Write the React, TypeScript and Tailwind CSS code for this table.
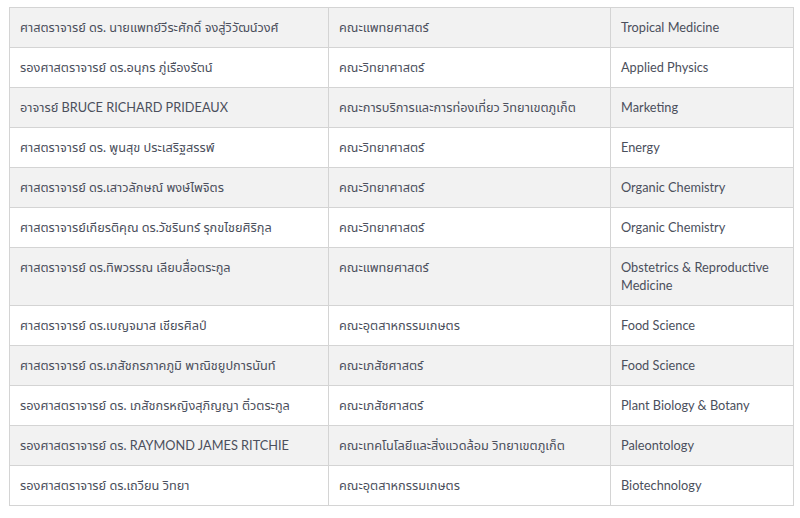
const rows: [string, string, string][] = [
  ['ศาสตราจารย์ ดร. นายแพทย์วีระศักดิ์ จงสู่วิวัฒน์วงศ์', 'คณะแพทยศาสตร์', 'Tropical Medicine'],
  ['รองศาสตราจารย์ ดร.อนุกร ภู่เรืองรัตน์', 'คณะวิทยาศาสตร์', 'Applied Physics'],
  ['อาจารย์ BRUCE RICHARD PRIDEAUX', 'คณะการบริการและการท่องเที่ยว วิทยาเขตภูเก็ต', 'Marketing'],
  ['ศาสตราจารย์ ดร. พูนสุข ประเสริฐสรรพ์', 'คณะวิทยาศาสตร์', 'Energy'],
  ['ศาสตราจารย์ ดร.เสาวลักษณ์ พงษ์ไพจิตร', 'คณะวิทยาศาสตร์', 'Organic Chemistry'],
  ['ศาสตราจารย์เกียรติคุณ ดร.วัชรินทร์ รุกขไชยศิริกุล', 'คณะวิทยาศาสตร์', 'Organic Chemistry'],
  ['ศาสตราจารย์ ดร.ทิพวรรณ เลียบสื่อตระกูล', 'คณะแพทยศาสตร์', 'Obstetrics & Reproductive Medicine'],
  ['ศาสตราจารย์ ดร.เบญจมาส เชียรศิลป์', 'คณะอุตสาหกรรมเกษตร', 'Food Science'],
  ['ศาสตราจารย์ ดร.เภสัชกรภาคภูมิ พาณิชยูปการนันท์', 'คณะเภสัชศาสตร์', 'Food Science'],
  ['รองศาสตราจารย์ ดร. เภสัชกรหญิงสุภิญญา ติ๋วตระกูล', 'คณะเภสัชศาสตร์', 'Plant Biology & Botany'],
  ['รองศาสตราจารย์ ดร. RAYMOND JAMES RITCHIE', 'คณะเทคโนโลยีและสิ่งแวดล้อม วิทยาเขตภูเก็ต', 'Paleontology'],
  ['รองศาสตราจารย์ ดร.เถวียน วิทยา', 'คณะอุตสาหกรรมเกษตร', 'Biotechnology'],
];

export default function App() {
  return (
    <div className="w-[800px] h-[518px] bg-white pt-[7px] pl-[9px] font-['Lato','Noto_Sans_Thai','Noto_Sans',sans-serif] text-[12.75px] leading-[18px] text-[#4b4f5c]">
      <table className="w-[784px] border-collapse table-fixed">
        <colgroup>
          <col className="w-[319px]" />
          <col className="w-[282px]" />
          <col className="w-[183px]" />
        </colgroup>
        <tbody>
          {rows.map((r, i) => (
            <tr key={i} className={i % 2 === 0 ? 'bg-[#f2f2f2]' : 'bg-white'}>
              {r.map((c, j) => (
                <td key={j} className="border border-[#d4d4d4] px-[10px] pt-[10px] pb-[11px] align-top">
                  {c}
                </td>
              ))}
            </tr>
          ))}
        </tbody>
      </table>
    </div>
  );
}
